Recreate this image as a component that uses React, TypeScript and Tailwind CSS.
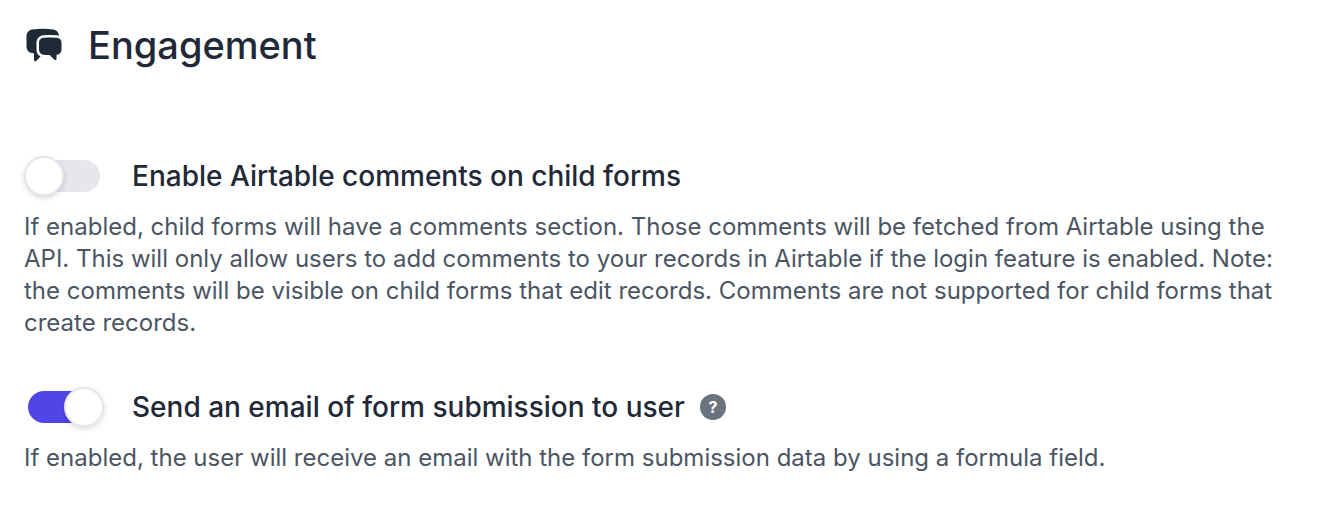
import { useState } from 'react';
import { HiChatBubbleLeftRight } from 'react-icons/hi2';

interface ToggleProps {
  enabled: boolean;
  onChange: (value: boolean) => void;
  label: string;
}

function Toggle({ enabled, onChange, label }: ToggleProps) {
  return (
    <button
      type="button"
      role="switch"
      aria-checked={enabled}
      aria-label={label}
      onClick={() => onChange(!enabled)}
      className="flex h-10 w-20 shrink-0 items-center"
    >
      <span
        className={
          enabled
            ? 'ml-1 flex h-8 w-[72px] items-center justify-end rounded-full bg-[#4f46e5]'
            : 'ml-1 flex h-8 w-[72px] items-center justify-start rounded-full bg-[#e5e7eb]'
        }
      >
        <span
          className={
            enabled
              ? '-mr-1 size-10 shrink-0 rounded-full border-2 border-[#e5e7eb] bg-white shadow-[0_2px_6px_rgba(0,0,0,0.1),0_2px_4px_rgba(0,0,0,0.06)]'
              : '-ml-1 size-10 shrink-0 rounded-full border-2 border-[#e5e7eb] bg-white shadow-[0_2px_6px_rgba(0,0,0,0.1),0_2px_4px_rgba(0,0,0,0.06)]'
          }
        />
      </span>
    </button>
  );
}

export default function App() {
  const [comments, setComments] = useState(false);
  const [sendEmail, setSendEmail] = useState(true);

  return (
    <div className="h-[520px] w-[1328px] overflow-hidden bg-white px-6 pt-[21px] font-['Inter',sans-serif]">
      <div className="flex h-12 items-center gap-6">
        <HiChatBubbleLeftRight className="size-10 shrink-0 text-[#1f2937]" />
        <h1 className="text-[38px] leading-[48px] font-medium text-[#1f2937]">Engagement</h1>
      </div>

      <div className="mt-[87px] flex h-10 items-center gap-7">
        <Toggle enabled={comments} onChange={setComments} label="Enable Airtable comments" />
        <h2 className="text-[28px] leading-10 font-medium text-[#1f2937]">
          Enable Airtable comments on child forms
        </h2>
      </div>
      <p className="mt-[15px] w-[1260px] text-2xl leading-8 text-[#4b5563]">
        If enabled, child forms will have a comments section. Those comments will be fetched from Airtable using the
        API. This will only allow users to add comments to your records in Airtable if the login feature is enabled. Note:
        the comments will be visible on child forms that edit records. Comments are not supported for child forms that
        create records.
      </p>

      <div className="mt-12 flex h-10 items-center">
        <Toggle enabled={sendEmail} onChange={setSendEmail} label="Send an email" />
        <h2 className="ml-7 text-[28px] leading-10 font-medium text-[#1f2937]">
          Send an email of form submission to user
        </h2>
        <span className="ml-[15px] flex size-[26px] items-center justify-center rounded-full bg-[#6b7280] text-base font-bold text-white">
          ?
        </span>
      </div>
      <p className="mt-[15px] text-2xl leading-8 text-[#4b5563]">
        If enabled, the user will receive an email with the form submission data by using a formula field.
      </p>
    </div>
  );
}
